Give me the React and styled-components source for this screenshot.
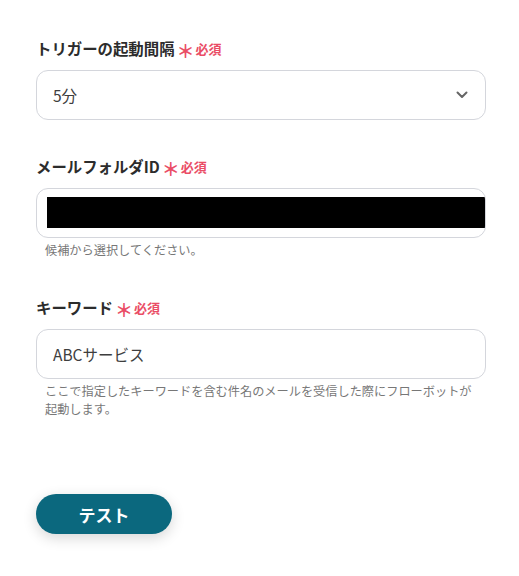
import React from "react";
import styled, { createGlobalStyle } from "styled-components";

const Global = createGlobalStyle`
  html, body { margin: 0; padding: 0; background: #ffffff; }
  body { font-family: "Noto Sans CJK JP", "Noto Sans", sans-serif; color: #333333; }
`;

const Page = styled.div`
  width: 519px;
  height: 576px;
  box-sizing: border-box;
  padding: 37px 33px 0 36px;
  display: flex;
  flex-direction: column;
`;

const Field = styled.div`
  display: flex;
  flex-direction: column;
  margin-bottom: ${(p) => p.$gap}px;
`;

const Label = styled.div`
  display: flex;
  align-items: center;
  height: 22px;
  font-size: 15.4px;
  font-weight: 700;
  color: #2c2c2c;
  margin-bottom: 11px;
`;

const Star = styled.span`
  color: #ea4d66;
  font-size: 18px;
  font-weight: 700;
  margin-left: 2px;
  margin-right: 1px;
  line-height: 1;
  position: relative;
  top: 2px;
`;

const Req = styled.span`
  color: #ea4d66;
  font-size: 13px;
  font-weight: 700;
`;

const Box = styled.div`
  position: relative;
  box-sizing: border-box;
  height: 50px;
  border: 1px solid #d4d6dc;
  border-radius: 12px;
  display: flex;
  align-items: center;
  padding: 0 16px;
  font-size: 15.5px;
  color: #3e3e3e;
  overflow: hidden;
`;

const Chevron = styled.svg`
  position: absolute;
  right: 17px;
  top: 50%;
  transform: translateY(-50%);
`;

const Redact = styled.div`
  position: absolute;
  left: 10px;
  right: 0;
  top: 8px;
  bottom: 9px;
  background: #000000;
`;

const Hint = styled.div`
  margin-top: 3px;
  padding-left: 9px;
  padding-right: 12px;
  font-size: 12.2px;
  line-height: 18px;
  color: #777777;
`;

const Button = styled.button`
  margin-top: 76px;
  width: 136px;
  height: 40px;
  border: none;
  border-radius: 20px;
  background: #0b687e;
  color: #ffffff;
  font-family: "Noto Sans CJK JP", "Noto Sans", sans-serif;
  font-size: 17px;
  font-weight: 700;
  box-shadow: 0 4px 14px rgba(0, 0, 0, 0.16);
  cursor: pointer;
`;

function FieldLabel({ children }) {
  return (
    <Label>
      {children}
      <Star>＊</Star>
      <Req>必須</Req>
    </Label>
  );
}

export default function App() {
  return (
    <>
      <Global />
      <Page>
        <Field $gap={35}>
          <FieldLabel>トリガーの起動間隔</FieldLabel>
          <Box>
            5分
            <Chevron width="12" height="8" viewBox="0 0 12 8" fill="none">
              <path d="M1.5 1.5 L6 6 L10.5 1.5" stroke="#666" strokeWidth="2" strokeLinecap="round" strokeLinejoin="round" />
            </Chevron>
          </Box>
        </Field>
        <Field $gap={37}>
          <FieldLabel>メールフォルダID</FieldLabel>
          <Box>
            <Redact />
          </Box>
          <Hint>候補から選択してください。</Hint>
        </Field>
        <Field $gap={0}>
          <FieldLabel>キーワード</FieldLabel>
          <Box>ABCサービス</Box>
          <Hint>ここで指定したキーワードを含む件名のメールを受信した際にフローボットが起動します。</Hint>
        </Field>
        <Button>テスト</Button>
      </Page>
    </>
  );
}
